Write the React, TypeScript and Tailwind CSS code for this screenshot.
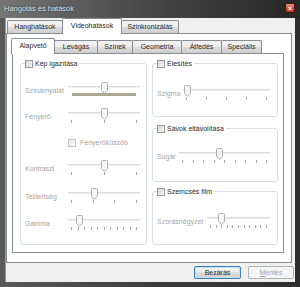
import React from "react";

// --- Kis vezérlők ---
const Check = ({ dim }: { dim?: boolean }) => (
  <span
    className={
      dim
        ? "block w-[8px] h-[8px] shrink-0 border border-[#c4c4c4] bg-[linear-gradient(135deg,#e8e8e8,#fbfbfb)]"
        : "block w-[8px] h-[8px] shrink-0 border border-[#9a9a9a] bg-[linear-gradient(135deg,#d4d4d4,#f6f6f6)]"
    }
  />
);

const Thumb = () => (
  <svg width="7" height="12" viewBox="0 0 7 12">
    <path
      d="M1.5 0.5H5.5Q6.5 0.5 6.5 1.5V8.5L3.5 11.3L0.5 8.5V1.5Q0.5 0.5 1.5 0.5Z"
      fill="#f6f6f6"
      stroke="#b0b0b0"
    />
  </svg>
);

type SliderProps = { w: string; at: string; ticks: number; hue?: boolean };

function Slider({ w, at, ticks, hue }: SliderProps) {
  return (
    <div className={`relative h-[15px] shrink-0 ${w}`}>
      <div className="absolute left-0 right-0 top-[4px] h-[2px] bg-[#dcdcdc] border-b border-[#efefef]" />
      <div className={`absolute top-0 ${at}`}>
        <Thumb />
      </div>
      {hue ? (
        <div className="pt-[11px] px-[4px]">
          <div className="h-[3px] bg-[#aaa796]" />
        </div>
      ) : (
        <div className="pt-[12px] px-[3px] flex justify-between">
          {Array.from({ length: ticks }).map((_, i) => (
            <span key={i} className="block w-px h-[3px] bg-[#aaaaaa]" />
          ))}
        </div>
      )}
    </div>
  );
}

const Label = ({ text, w }: { text: string; w?: string }) => (
  <div className={`pt-[4px] leading-[9px] text-[#a6a6a6] whitespace-nowrap ${w ?? ""}`}>
    {text}
  </div>
);

const GroupHead = ({ text }: { text: string }) => (
  <div className="-mt-[5px] flex items-center gap-[2px] bg-white w-fit pr-[2px] h-[9px]">
    <Check />
    <span className="leading-[9px] text-[#2a2a2a]">{text}</span>
  </div>
);

// --- Fülek ---
const OuterTab = ({ label, w, active }: { label: string; w: string; active?: boolean }) =>
  active ? (
    <div
      className={`${w} h-[16px] -mb-px -ml-px relative z-10 border border-b-0 border-[#898c95] bg-white rounded-t-[2px] flex items-center justify-center text-[#2a2a2a]`}
    >
      {label}
    </div>
  ) : (
    <div
      className={`${w} h-[13px] -ml-px first:ml-0 border border-b-0 border-[#898c95] rounded-t-[2px] bg-[linear-gradient(#f3f3f3,#ebebeb_50%,#dcdcdc_50%,#cfcfcf)] flex items-center justify-center text-[#2a2a2a]`}
    >
      {label}
    </div>
  );

export default function App() {
  return (
    <div className="w-[300px] h-[287px] flex flex-col bg-[linear-gradient(to_right,#5a5a5a,#3c3c3c_50%,#2e2e2e)] font-['Liberation_Sans',Arial,sans-serif] text-[7px] overflow-hidden">
      {/* Címsor */}
      <div className="h-[18px] shrink-0 flex items-start bg-[linear-gradient(to_right,#767676,#4a4a4a_45%,#262626)]">
        <div className="pl-[4px] pt-[4px] leading-[9px] text-[7.5px] text-[#e4e4e4] [text-shadow:0_0_2px_#222]">
          Hangolás és hatások
        </div>
        <div className="ml-auto mr-[5px] mt-[3px] w-[10px] h-[10px] rounded-[2px] border border-[#3a1a14] bg-[linear-gradient(#e89a86,#d0523a_50%,#b8301c)] flex items-center justify-center text-white text-[7px] leading-none font-bold">
          ×
        </div>
      </div>

      {/* Ablak tartalma */}
      <div className="flex-1 mx-[5px] mb-[5px] bg-[#f0f0f0] flex flex-col border-l border-[#9a9a9a]">
        <div className="h-[15px] shrink-0 flex items-end pl-[1px]">
          <OuterTab label="Hanghatások" w="w-[56px]" />
          <OuterTab label="Videohatások" w="w-[60px]" active />
          <OuterTab label="Szinkronizálás" w="w-[58px]" />
        </div>

        <div className="h-[230px] shrink-0 mr-[3px] border border-[#898c95] bg-white pt-[5px] pl-[5px]">
          <div className="h-[14px] flex items-end">
            <OuterTab label="Alapvető" w="w-[44px]" active />
            <OuterTab label="Levágás" w="w-[44px]" />
            <OuterTab label="Színek" w="w-[36px]" />
            <OuterTab label="Geometria" w="w-[50px]" />
            <OuterTab label="Átfedés" w="w-[41px]" />
            <OuterTab label="Speciális" w="w-[41px]" />
          </div>

          <div className="w-[272px] h-[200px] border border-[#898c95] bg-white flex gap-[5px] pl-[7px] pt-[9px]">
            {/* Kép igazítása */}
            <div className="w-[127px] h-[182px] border border-[#d8e0e6] rounded-[3px] flex flex-col pl-[4px]">
              <GroupHead text="Kép igazítása" />
              <div className="mt-[14px] flex">
                <Label text="Színárnyalat" w="w-[43px]" />
                <Slider w="w-[72px]" at="left-[33px]" ticks={0} hue />
              </div>
              <div className="mt-[11px] flex">
                <Label text="Fényerő" w="w-[43px]" />
                <Slider w="w-[72px]" at="left-[33px]" ticks={3} />
              </div>
              <div className="mt-[15px] pl-[43px] flex items-center gap-[4px] h-[9px]">
                <Check dim />
                <span className="leading-[9px] text-[#a6a6a6]">Fényerőküszöb</span>
              </div>
              <div className="mt-[13px] flex">
                <Label text="Kontraszt" w="w-[43px]" />
                <Slider w="w-[72px]" at="left-[33px]" ticks={3} />
              </div>
              <div className="mt-[13px] flex">
                <Label text="Telítettség" w="w-[43px]" />
                <Slider w="w-[72px]" at="left-[23px]" ticks={4} />
              </div>
              <div className="mt-[12px] flex">
                <Label text="Gamma" w="w-[43px]" />
                <Slider w="w-[72px]" at="left-[8px]" ticks={11} />
              </div>
            </div>

            {/* Jobb oszlop */}
            <div className="w-[126px] flex flex-col">
              <div className="h-[54px] border border-[#d8e0e6] rounded-[3px] flex flex-col pl-[4px] pr-[7px]">
                <GroupHead text="Élesítés" />
                <div className="mt-[17px] flex justify-between">
                  <Label text="Szigma" />
                  <Slider w="w-[87px]" at="left-[1px]" ticks={5} />
                </div>
              </div>
              <div className="mt-[11px] h-[54px] border border-[#d8e0e6] rounded-[3px] flex flex-col pl-[4px] pr-[7px]">
                <GroupHead text="Sávok eltávolítása" />
                <div className="mt-[15px] flex justify-between">
                  <Label text="Sugár" />
                  <Slider w="w-[91px]" at="left-[37px]" ticks={9} />
                </div>
              </div>
              <div className="mt-[9px] h-[54px] border border-[#d8e0e6] rounded-[3px] flex flex-col pl-[4px] pr-[7px]">
                <GroupHead text="Szemcsés film" />
                <div className="mt-[17px] flex justify-between">
                  <Label text="Szórásnégyzet" />
                  <Slider w="w-[63px]" at="left-[11px]" ticks={11} />
                </div>
              </div>
            </div>
          </div>
        </div>

        {/* Gombok */}
        <div className="mt-[3px] mr-[1px] flex justify-end gap-[7px]">
          <div className="w-[47px] h-[13px] rounded-[2px] border border-[#3c7fb1] shadow-[inset_0_0_0_1px_#c2e3f7] bg-[linear-gradient(#f4f4f4,#ebebeb_50%,#dddddd_50%,#cfcfcf)] flex items-center justify-center text-[#2a2a2a] leading-none">
            Bezárás
          </div>
          <div className="w-[46px] h-[13px] rounded-[2px] border border-[#adb2b5] bg-[#f4f4f4] flex items-center justify-center text-[#a6a6a6] leading-none">
            <span>
              <span className="underline">M</span>entés
            </span>
          </div>
        </div>
      </div>
    </div>
  );
}
